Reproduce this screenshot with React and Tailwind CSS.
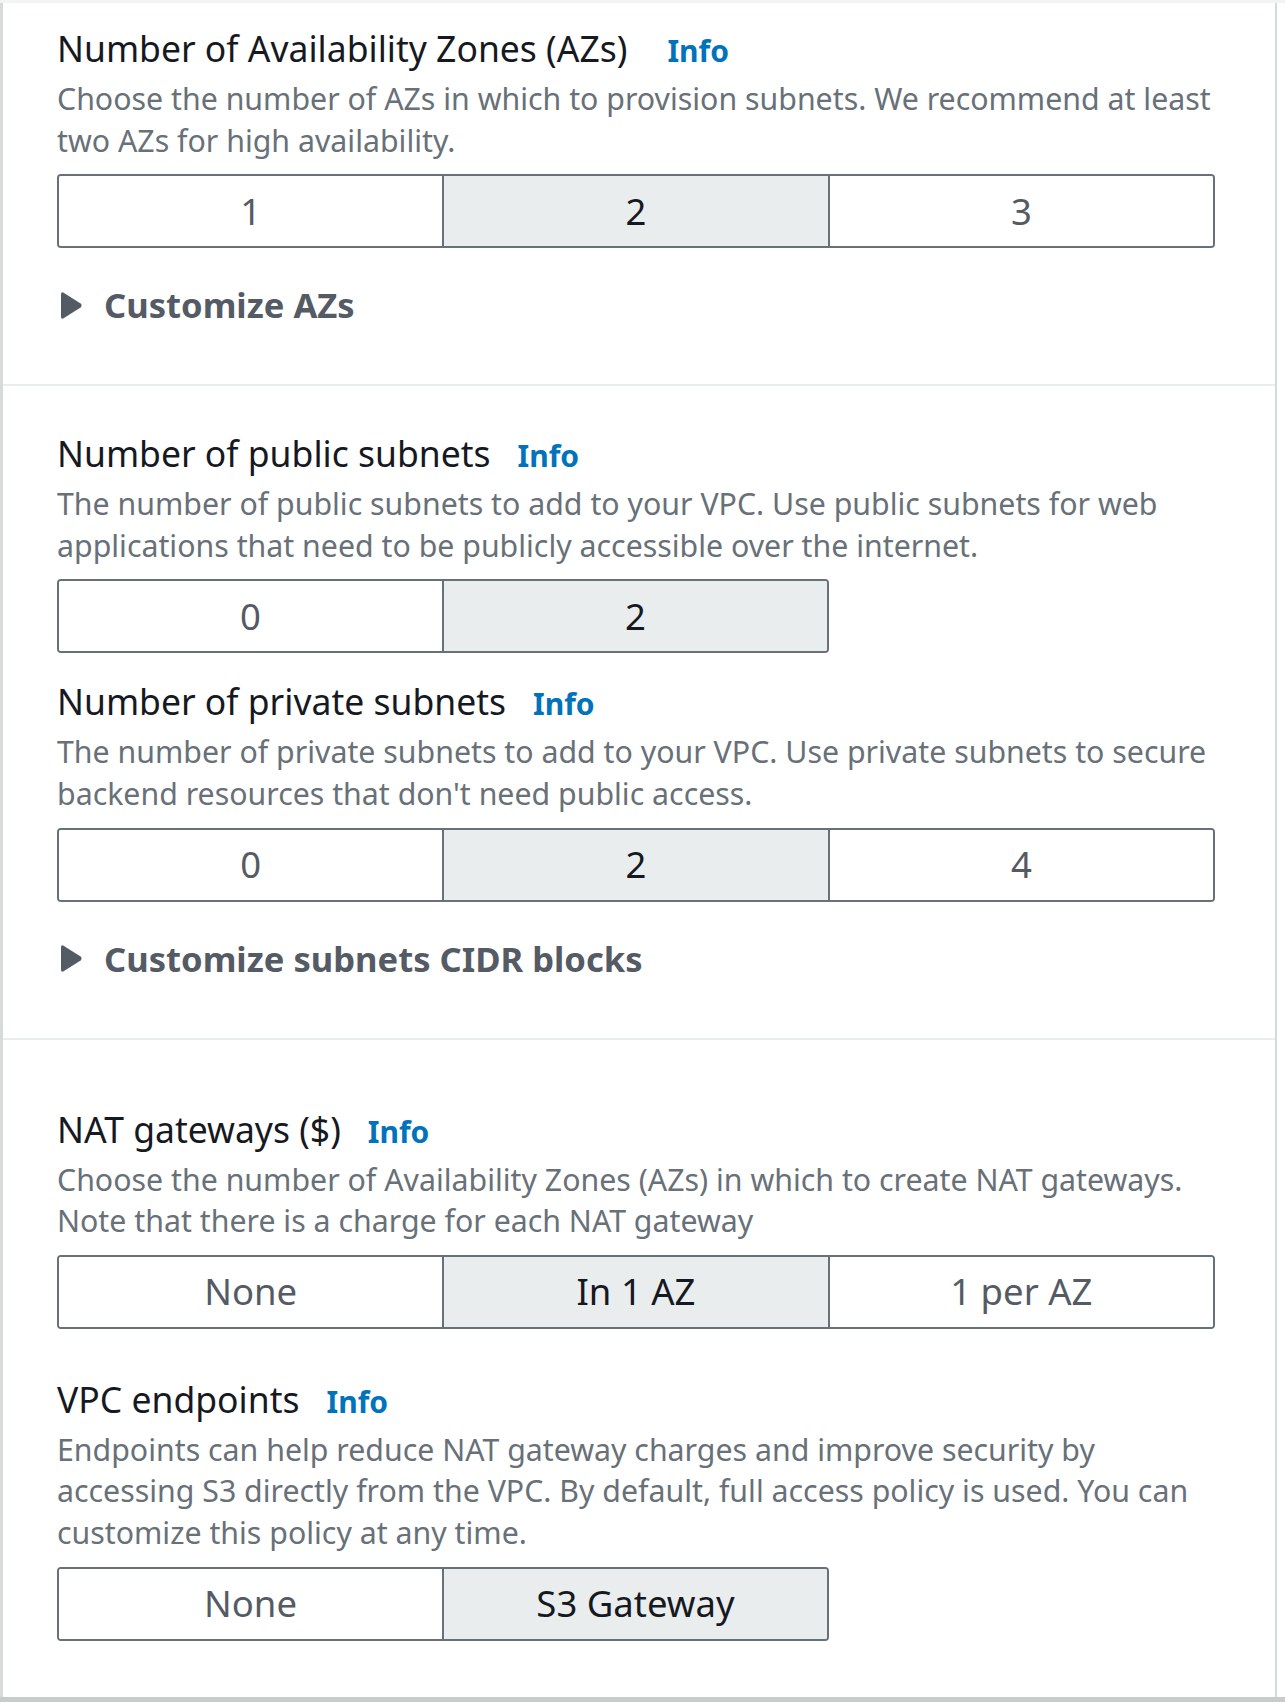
import React from "react";

const FONT = { fontFamily: '"Noto Sans", "Open Sans", sans-serif' };

function Caret() {
  return (
    <svg width="23" height="29" viewBox="0 0 23 29" className="shrink-0">
      <path d="M1 3.2 Q1 0.4 3.6 1.8 L20.6 12.6 Q22.6 14.5 20.6 16.4 L3.6 27.2 Q1 28.6 1 25.8 Z" fill="#545b64" />
    </svg>
  );
}

function Title({ children, infoGap = "ml-[27px]" }) {
  return (
    <div className="flex items-baseline h-[44px] leading-[44px]">
      <span className="text-[35.5px] text-[#16191f]">{children}</span>
      <span className={`${infoGap} text-[30px] font-bold text-[#0073bb]`}>Info</span>
    </div>
  );
}

function Desc({ lines }) {
  return (
    <div className="mt-[8px] text-[30.3px] leading-[41.6px] text-[#687078]">
      {lines.map((l, i) => (
        <div key={i} className="whitespace-nowrap">{l}</div>
      ))}
    </div>
  );
}

function Segmented({ options, selected, width }) {
  return (
    <div className={`mt-[13px] flex h-[74px] border-2 border-[#687078] rounded-[4px] overflow-hidden ${width}`}>
      {options.map((o, i) => (
        <div
          key={o}
          className={`flex-1 flex items-center justify-center text-[36.5px] ${i > 0 ? "border-l-2 border-[#687078]" : ""} ${
            i === selected ? "bg-[#eaeded] text-[#16191f]" : "bg-white text-[#545b64]"
          }`}
        >
          {o}
        </div>
      ))}
    </div>
  );
}

function Expander({ children }) {
  return (
    <div className="mt-[35px] flex items-center h-[44px] pl-[3px]">
      <Caret />
      <span className="ml-[21px] text-[34.6px] font-bold text-[#545b64] leading-[44px]">{children}</span>
    </div>
  );
}

export default function App() {
  return (
    <div className="w-[1285px] h-[1702px] bg-white flex flex-col overflow-hidden" style={FONT}>
      <div className="h-[3px] bg-[#f2f3f3] shrink-0" />
      <div className="flex-1 flex">
        <div className="w-[1277px] border-l-[3px] border-r-[2px] border-[#d5dbdb] flex flex-col">
          {/* Section 1 */}
          <div className="pl-[54px] pr-[60px] pt-[23px] pb-[57px]">
            <Title infoGap="ml-[40px]">Number of Availability Zones (AZs)</Title>
            <Desc
              lines={[
                "Choose the number of AZs in which to provision subnets. We recommend at least",
                "two AZs for high availability.",
              ]}
            />
            <Segmented options={["1", "2", "3"]} selected={1} width="w-[1158px]" />
            <Expander>Customize AZs</Expander>
          </div>
          <div className="h-[2px] bg-[#eaeded]" />
          {/* Section 2 */}
          <div className="pl-[54px] pr-[60px] pt-[45px] pb-[57px]">
            <Title>Number of public subnets</Title>
            <Desc
              lines={[
                "The number of public subnets to add to your VPC. Use public subnets for web",
                "applications that need to be publicly accessible over the internet.",
              ]}
            />
            <Segmented options={["0", "2"]} selected={1} width="w-[772px]" />
            <div className="mt-[26px]">
              <Title>Number of private subnets</Title>
            </div>
            <Desc
              lines={[
                "The number of private subnets to add to your VPC. Use private subnets to secure",
                "backend resources that don't need public access.",
              ]}
            />
            <Segmented options={["0", "2", "4"]} selected={1} width="w-[1158px]" />
            <Expander>Customize subnets CIDR blocks</Expander>
          </div>
          <div className="h-[2px] bg-[#eaeded]" />
          {/* Section 3 */}
          <div className="pl-[54px] pr-[60px] pt-[67px]">
            <Title>NAT gateways ($)</Title>
            <Desc
              lines={[
                "Choose the number of Availability Zones (AZs) in which to create NAT gateways.",
                "Note that there is a charge for each NAT gateway",
              ]}
            />
            <Segmented options={["None", "In 1 AZ", "1 per AZ"]} selected={1} width="w-[1158px]" />
            <div className="mt-[48px]">
              <Title>VPC endpoints</Title>
            </div>
            <Desc
              lines={[
                "Endpoints can help reduce NAT gateway charges and improve security by",
                "accessing S3 directly from the VPC. By default, full access policy is used. You can",
                "customize this policy at any time.",
              ]}
            />
            <Segmented options={["None", "S3 Gateway"]} selected={1} width="w-[772px]" />
          </div>
        </div>
      </div>
      <div className="h-[5px] bg-[#c8cccc] shrink-0" />
    </div>
  );
}
